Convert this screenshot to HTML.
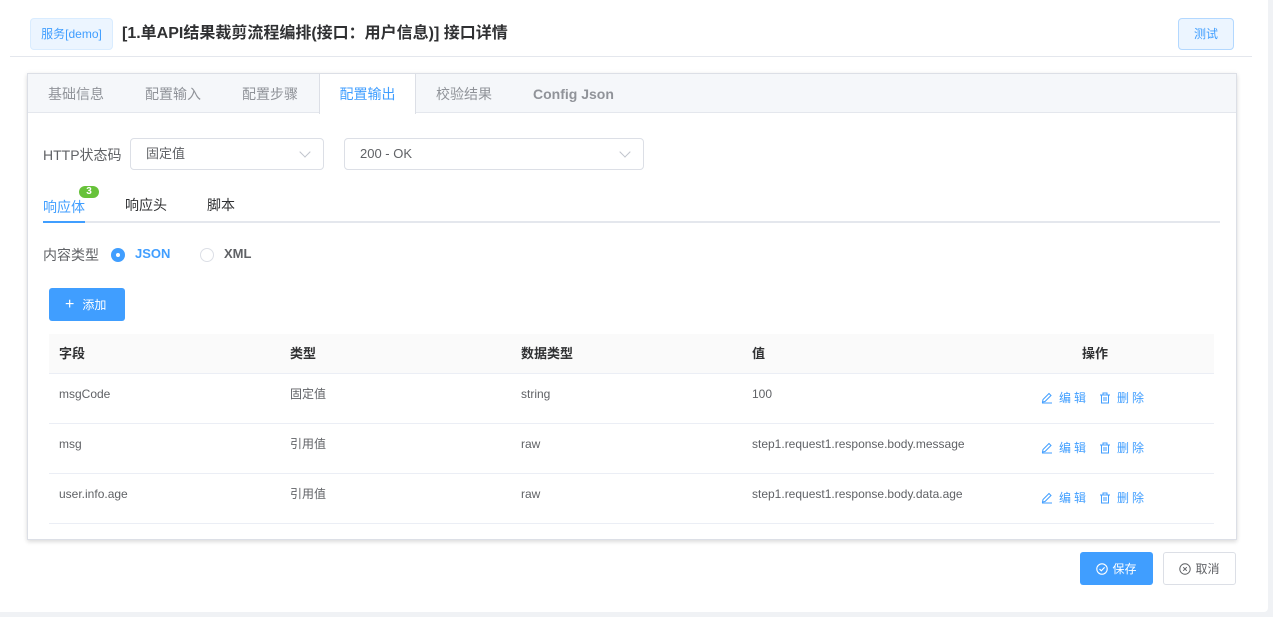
<!DOCTYPE html>
<html><head><meta charset="utf-8"><style>
*{box-sizing:border-box;margin:0;padding:0}
body{width:1273px;height:617px;background:#f0f2f5;font-family:"Liberation Sans","Noto Sans CJK SC",sans-serif;position:relative;overflow:hidden;color:#606266}
.abs{position:absolute}
.page{left:0;top:0;width:1268px;height:612px;background:#fff;border-radius:0 0 4px 0}
.tag{left:30px;top:18px;width:83px;height:32px;background:#ecf5ff;border:1px solid #d9ecff;border-radius:4px;color:#409eff;font-size:12px;line-height:30px;text-align:center}
.title{left:122px;top:22px;font-size:16px;font-weight:bold;color:#303133;line-height:24px}
.test{left:1178px;top:18px;width:56px;height:32px;background:#ecf5ff;border:1px solid #b3d8ff;border-radius:4px;color:#409eff;font-size:12px;line-height:30px;text-align:center}
.hr{left:10px;top:56px;width:1242px;height:1px;background:#e4e7ed}
.card{left:27px;top:73px;width:1210px;height:467px;border:1px solid #dcdfe6;box-shadow:0 2px 4px rgba(0,0,0,.12),0 0 6px rgba(0,0,0,.04);background:#fff}
.tabs{left:0;top:0;width:1208px;height:39px;background:#f5f7fa;border-bottom:1px solid #e4e7ed}
.tab{top:0;height:39px;line-height:40px;font-size:14px;color:#909399}
.tab.act{background:#fff;color:#409eff;border-left:1px solid #dcdfe6;border-right:1px solid #dcdfe6;height:40px;width:97px;text-align:center}
.sel{height:32px;border:1px solid #dcdfe6;border-radius:4px;font-size:13px;color:#606266;line-height:30px;padding-left:15px}
.sel:after{content:"";position:absolute;right:14px;top:9px;width:7px;height:7px;border-right:1px solid #c0c4cc;border-bottom:1px solid #c0c4cc;transform:rotate(45deg)}
.lbl{font-size:14px}
.th{font-size:13px;font-weight:bold;color:#303133;line-height:16px}
.td{font-size:12px;color:#606266;line-height:14px}
.op{font-size:12px;color:#409eff;letter-spacing:3px;line-height:14px;display:flex;align-items:center}
.op svg{margin-right:6px}
.row{left:49px;width:1165px;height:1px;background:#ebeef5}
</style></head><body>
<div class="abs page"></div>
<div class="abs tag">服务[demo]</div>
<div class="abs title">[1.单API结果裁剪流程编排(接口：用户信息)] 接口详情</div>
<div class="abs test">测试</div>
<div class="abs hr"></div>
<div class="abs card">
 <div class="abs tabs"></div>
 <div class="abs tab" style="left:20px">基础信息</div>
 <div class="abs tab" style="left:117px">配置输入</div>
 <div class="abs tab" style="left:214px">配置步骤</div>
 <div class="abs tab act" style="left:291px">配置输出</div>
 <div class="abs tab" style="left:408px">校验结果</div>
 <div class="abs tab" style="left:505px;font-weight:bold">Config Json</div>
</div>
<div class="abs lbl" style="left:43px;top:145px">HTTP状态码</div>
<div class="abs sel" style="left:130px;top:138px;width:194px">固定值</div>
<div class="abs sel" style="left:344px;top:138px;width:300px">200 - OK</div>
<div class="abs" style="left:79px;top:186px;width:20px;height:12px;border-radius:6px;background:#67c23a;color:#fff;font-size:10px;font-weight:bold;text-align:center;line-height:12px">3</div>
<div class="abs lbl" style="left:43px;top:197px;color:#409eff">响应体</div>
<div class="abs lbl" style="left:125px;top:195px;color:#303133">响应头</div>
<div class="abs lbl" style="left:207px;top:195px;color:#303133">脚本</div>
<div class="abs" style="left:43px;top:221px;width:1177px;height:2px;background:#e4e7ed"></div>
<div class="abs" style="left:43px;top:221px;width:42px;height:2px;background:#409eff"></div>
<div class="abs lbl" style="left:43px;top:245px">内容类型</div>
<div class="abs" style="left:111px;top:248px;width:14px;height:14px;border-radius:50%;background:#409eff"><div class="abs" style="left:5px;top:5px;width:4px;height:4px;border-radius:50%;background:#fff"></div></div>
<div class="abs" style="left:135px;top:246px;font-size:13px;font-weight:bold;color:#409eff">JSON</div>
<div class="abs" style="left:200px;top:248px;width:14px;height:14px;border-radius:50%;border:1px solid #dcdfe6"></div>
<div class="abs" style="left:224px;top:246px;font-size:13px;font-weight:bold;color:#606266">XML</div>
<div class="abs" style="left:49px;top:288px;width:76px;height:33px;background:#409eff;border-radius:3px;color:#fff;font-size:12px;line-height:33px;padding-left:16px"><span style="font-size:16px;margin-right:8px">+</span>添加</div>
<div class="abs" style="left:49px;top:334px;width:1165px;height:39px;background:#fafafa"></div>
<div class="abs row" style="top:373px"></div>
<div class="abs row" style="top:423px"></div>
<div class="abs row" style="top:473px"></div>
<div class="abs row" style="top:523px"></div>
<div class="abs th" style="left:59px;top:346px">字段</div>
<div class="abs th" style="left:290px;top:346px">类型</div>
<div class="abs th" style="left:521px;top:346px">数据类型</div>
<div class="abs th" style="left:752px;top:346px">值</div>
<div class="abs th" style="left:1082px;top:346px">操作</div>

<div class="abs td" style="left:59px;top:387px">msgCode</div>
<div class="abs td" style="left:290px;top:387px">固定值</div>
<div class="abs td" style="left:521px;top:387px">string</div>
<div class="abs td" style="left:752px;top:387px">100</div>
<div class="abs td" style="left:59px;top:437px">msg</div>
<div class="abs td" style="left:290px;top:437px">引用值</div>
<div class="abs td" style="left:521px;top:437px">raw</div>
<div class="abs td" style="left:752px;top:437px">step1.request1.response.body.message</div>
<div class="abs td" style="left:59px;top:487px">user.info.age</div>
<div class="abs td" style="left:290px;top:487px">引用值</div>
<div class="abs td" style="left:521px;top:487px">raw</div>
<div class="abs td" style="left:752px;top:487px">step1.request1.response.body.data.age</div>

<div class="abs op" style="left:1041px;top:391px"><svg width="12" height="12" viewBox="0 0 12 12" fill="none" stroke="#409eff" stroke-width="1"><path d="M8 1.5l2 2-6 6-2.5.5.5-2.5z M1 11h10"/></svg>编辑<span style="width:10px"></span><svg width="12" height="12" viewBox="0 0 12 12" fill="none" stroke="#409eff" stroke-width="1"><path d="M1 3h10M4 3V1h4v2M2.5 3v8h7V3M5 5v4M7 5v4"/></svg>删除</div>
<div class="abs op" style="left:1041px;top:441px"><svg width="12" height="12" viewBox="0 0 12 12" fill="none" stroke="#409eff" stroke-width="1"><path d="M8 1.5l2 2-6 6-2.5.5.5-2.5z M1 11h10"/></svg>编辑<span style="width:10px"></span><svg width="12" height="12" viewBox="0 0 12 12" fill="none" stroke="#409eff" stroke-width="1"><path d="M1 3h10M4 3V1h4v2M2.5 3v8h7V3M5 5v4M7 5v4"/></svg>删除</div>
<div class="abs op" style="left:1041px;top:491px"><svg width="12" height="12" viewBox="0 0 12 12" fill="none" stroke="#409eff" stroke-width="1"><path d="M8 1.5l2 2-6 6-2.5.5.5-2.5z M1 11h10"/></svg>编辑<span style="width:10px"></span><svg width="12" height="12" viewBox="0 0 12 12" fill="none" stroke="#409eff" stroke-width="1"><path d="M1 3h10M4 3V1h4v2M2.5 3v8h7V3M5 5v4M7 5v4"/></svg>删除</div>

<div class="abs" style="left:1080px;top:552px;width:73px;height:33px;background:#409eff;border-radius:3px;color:#fff;font-size:12px;display:flex;align-items:center;justify-content:center"><svg width="12" height="12" viewBox="0 0 12 12" fill="none" stroke="#fff" stroke-width="1.1" style="margin-right:4px"><circle cx="6" cy="6" r="5.2"/><path d="M3.5 6l1.8 1.8L8.6 4.4"/></svg>保存</div>
<div class="abs" style="left:1163px;top:552px;width:73px;height:33px;border:1px solid #dcdfe6;border-radius:3px;color:#606266;font-size:12px;display:flex;align-items:center;justify-content:center"><svg width="12" height="12" viewBox="0 0 12 12" fill="none" stroke="#606266" stroke-width="1" style="margin-right:4px"><circle cx="6" cy="6" r="5.2"/><path d="M4.2 4.2l3.6 3.6M7.8 4.2l-3.6 3.6"/></svg>取消</div>
</body></html>
